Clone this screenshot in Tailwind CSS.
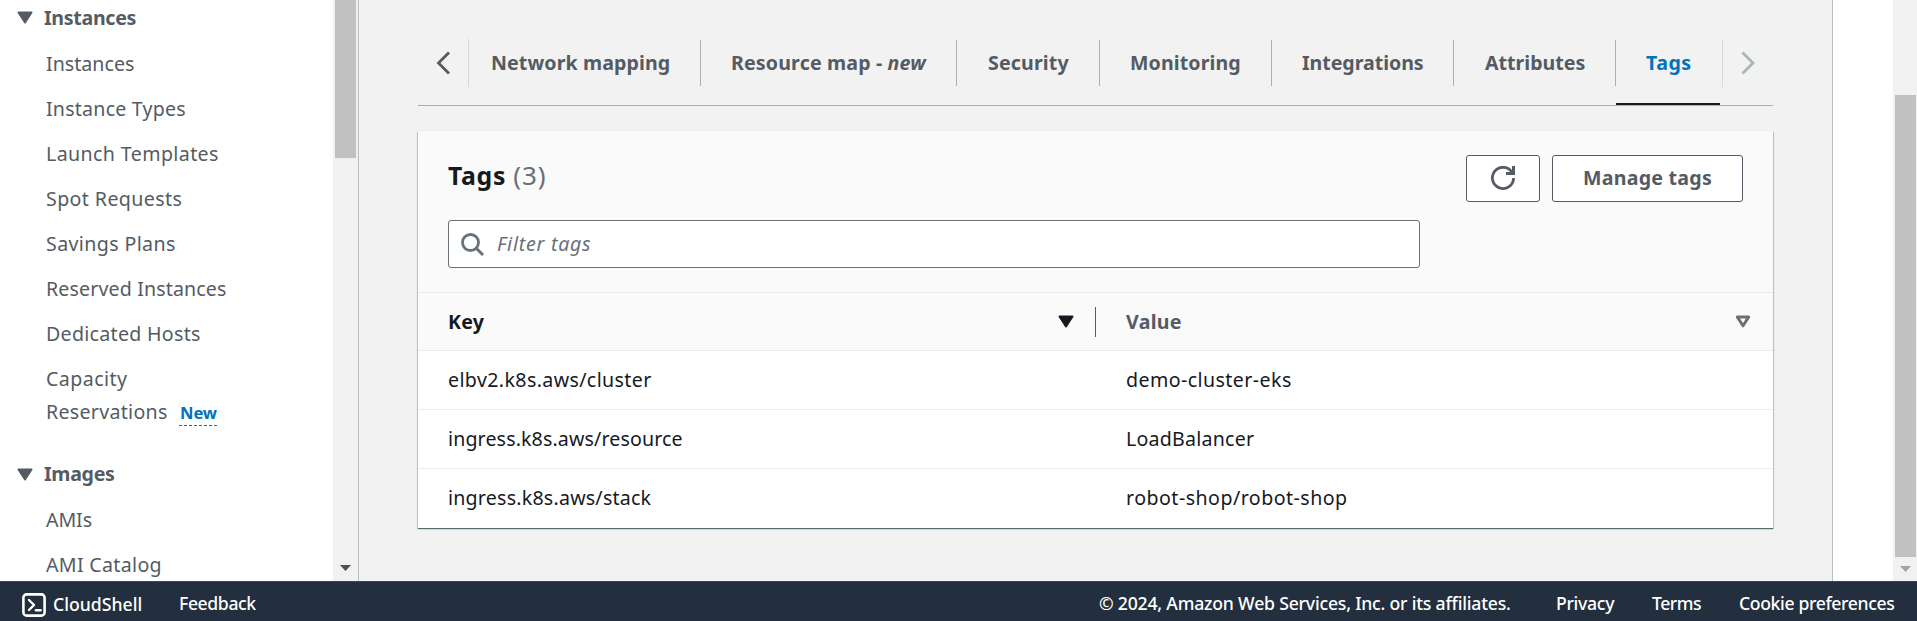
<!DOCTYPE html>
<html lang="en">
<head>
<meta charset="utf-8">
<title>Tags | EC2</title>
<script src="https://cdn.jsdelivr.net/npm/@tailwindcss/browser@4"></script>
</head>
<body class="flex h-[621px] w-[1917px] flex-col overflow-hidden bg-white font-['Noto_Sans',sans-serif] text-[19.6px] whitespace-nowrap text-[#16191f]">
<div class="flex h-[581px] overflow-hidden">

  <!-- Side navigation -->
  <nav class="w-[333px] shrink-0 pt-px leading-[33px] text-[#545b64]">
    <h2 class="flex items-center pl-[17px] font-bold tracking-[-0.3px]"><svg class="mr-[11px] h-[13px] w-[16px]" viewBox="0 0 16 13"><path d="M1.5 1.5h13L8 11.5z" fill="#545b64" stroke="#545b64" stroke-width="2" stroke-linejoin="round"/></svg>Instances</h2>
    <ul class="mt-[13px] flex flex-col gap-[12px] pl-[46px]">
      <li class="tracking-[0.03px]">Instances</li>
      <li class="tracking-[0.22px]">Instance Types</li>
      <li class="tracking-[0.39px]">Launch Templates</li>
      <li class="tracking-[0.4px]">Spot Requests</li>
      <li class="tracking-[0.38px]">Savings Plans</li>
      <li class="tracking-[0.14px]">Reserved Instances</li>
      <li class="tracking-[0.29px]">Dedicated Hosts</li>
      <li><span class="tracking-[0.44px]">Capacity</span><br>
        <span class="flex h-[33px] items-start"><span class="w-[133px] tracking-[0.29px]">Reservations</span><span class="mt-[4px] h-[27px] w-[38px] border-b border-dashed border-[#0073bb] pl-px text-[16.6px] leading-[27px] font-bold tracking-[-0.1px] text-[#0073bb]">New</span></span></li>
    </ul>
    <h2 class="mt-[29px] flex items-center pl-[17px] font-bold tracking-[-0.3px]"><svg class="mt-px mr-[11px] h-[13px] w-[16px]" viewBox="0 0 16 13"><path d="M1.5 1.5h13L8 11.5z" fill="#545b64" stroke="#545b64" stroke-width="2" stroke-linejoin="round"/></svg>Images</h2>
    <ul class="mt-[13px] flex flex-col gap-[12px] pl-[46px]">
      <li class="tracking-[-0.1px]">AMIs</li>
      <li class="tracking-[0.32px]">AMI Catalog</li>
    </ul>
  </nav>
  <div class="flex w-[25px] shrink-0 flex-col items-center justify-between bg-[#f1f1f1] pb-[10px]">
    <div class="h-[158px] w-[21px] bg-[#c1c1c1]"></div>
    <svg class="h-[6px] w-[11px]" viewBox="0 0 11 6"><path d="M0 0h11L5.5 6z" fill="#505050"/></svg>
  </div>

  <!-- Main panel -->
  <main class="w-[1475px] shrink-0 border-x border-[#b7bdc2] bg-[#f2f2f2] pl-[59px]">
    <div class="flex h-[106px] w-[1355px] border-b border-[#aab0b2] pt-[39px] leading-[48px] font-bold text-[#545b64]">
      <div class="h-[48px] w-[51px] border-r border-[#d5dbdb] pt-[12px] pl-[18px]"><svg class="h-[24px] w-[16px]" viewBox="0 0 16 24" fill="none"><path d="M13 1.5 2.5 12 13 22.5" stroke="#545b64" stroke-width="2.8"/></svg></div>
      <div class="mt-px h-[46px] w-[232px] border-r border-[#aab0b2] pl-[22px] leading-[46px] tracking-[0.1px]">Network mapping</div>
      <div class="mt-px h-[46px] w-[256px] border-r border-[#aab0b2] pl-[30px] leading-[46px] tracking-[0.15px]">Resource map - <em class="tracking-[0.1px]">new</em></div>
      <div class="mt-px h-[46px] w-[143px] border-r border-[#aab0b2] pl-[31px] leading-[46px] tracking-[0.15px]">Security</div>
      <div class="mt-px h-[46px] w-[172px] border-r border-[#aab0b2] pl-[30px] leading-[46px] tracking-[0.1px]">Monitoring</div>
      <div class="mt-px h-[46px] w-[182px] border-r border-[#aab0b2] pl-[30px] leading-[46px] tracking-[-0.05px]">Integrations</div>
      <div class="mt-px h-[46px] w-[162px] border-r border-[#aab0b2] pl-[31px] leading-[46px]">Attributes</div>
      <div class="mt-px h-[65px] w-[104px] border-b-2 border-[#16191f] pl-[30px] leading-[46px] tracking-[0.5px] text-[#0073bb]">Tags</div>
      <div class="ml-[2px] h-[48px] w-[50px] border-l border-[#d5dbdb] pt-[12px] pl-[17px]"><svg class="h-[24px] w-[16px]" viewBox="0 0 16 24" fill="none"><path d="M2.5 1.5 13 12 2.5 22.5" stroke="#aab7b8" stroke-width="2.8"/></svg></div>
    </div>

    <section class="mt-[25px] h-[397px] w-[1355px] bg-white shadow-[0_1px_1px_0_rgba(0,28,36,0.5),1px_1px_1px_0_rgba(0,28,36,0.15),-1px_1px_1px_0_rgba(0,28,36,0.15),0_-1px_0_0_#eaeded]">
      <div class="h-[161px] bg-[#fafafa] px-[30px] pt-[24px]">
        <div class="flex h-[47px] justify-between">
          <h1 class="text-[24.8px] leading-[40px] font-bold tracking-[0.7px]">Tags <span class="text-[26px] font-normal tracking-[0.9px] text-[#687078]">(3)</span></h1>
          <div class="flex gap-[12px]">
            <button class="flex h-[47px] w-[74px] items-center justify-center rounded-[3px] border border-[#545b64] bg-white"><svg class="-mt-px h-[24px] w-[24px]" viewBox="0 0 24 24" fill="none" stroke="#545b64"><path d="M22.6 12A10.6 10.6 0 1 1 20.8 6" stroke-width="2.8"/><path d="M22.5 0v7.4H15" stroke-width="3"/><path d="M17 9h7V1z" fill="#545b64" stroke="none"/></svg></button>
            <button class="h-[47px] w-[191px] rounded-[3px] border border-[#545b64] bg-white pb-[2px] pl-[30px] text-left leading-[43px] font-bold tracking-[0.25px] text-[#545b64]">Manage tags</button>
          </div>
        </div>
        <div class="mt-[18px] flex h-[48px] w-[972px] items-center rounded-[3px] border border-[#687078] bg-white pl-[12px]">
          <svg class="h-[23px] w-[24px]" viewBox="0 0 24 23" fill="none" stroke="#687078"><circle cx="9.5" cy="9.5" r="8" stroke-width="2.8"/><path d="m15 15 7 7" stroke-width="3"/></svg>
          <span class="ml-[12px] leading-[46px] tracking-[0.75px] text-[#687078] italic">Filter tags</span>
        </div>
      </div>
      <div class="flex h-[59px] items-center border-y border-[#eaeded] bg-[#fafafa] pr-[22px] pl-[30px] font-bold">
        <div class="flex h-[30px] w-[648px] items-center border-r border-[#545b64] pr-[21px]"><span class="flex-1 leading-[30px] tracking-[0.2px]">Key</span><svg class="h-[13px] w-[16px]" viewBox="0 0 16 13"><path d="M1.5 1.5h13L8 11.5z" fill="#16191f" stroke="#16191f" stroke-width="2" stroke-linejoin="round"/></svg></div>
        <div class="flex flex-1 items-center pl-[30px] text-[#545b64]"><span class="flex-1 leading-[30px] tracking-[0.3px]">Value</span><svg class="h-[13px] w-[16px]" viewBox="0 0 16 13" fill="none"><path d="M2.3 2h11.4L8 10.8z" stroke="#687078" stroke-width="3" stroke-linejoin="round"/></svg></div>
      </div>
      <div class="flex h-[59px] border-b border-[#eaeded] pl-[30px] leading-[58px]"><div class="w-[678px] tracking-[0.38px]">elbv2.k8s.aws/cluster</div><div class="tracking-[0.42px]">demo-cluster-eks</div></div>
      <div class="flex h-[59px] border-b border-[#eaeded] pl-[30px] leading-[58px]"><div class="w-[678px] tracking-[0.13px]">ingress.k8s.aws/resource</div><div class="tracking-[0.23px]">LoadBalancer</div></div>
      <div class="flex h-[59px] pl-[30px] leading-[58px]"><div class="w-[678px] tracking-[0.22px]">ingress.k8s.aws/stack</div><div class="tracking-[0.47px]">robot-shop/robot-shop</div></div>
    </section>
  </main>

  <!-- Page scrollbar -->
  <div class="ml-auto flex w-[24px] shrink-0 flex-col items-end bg-[#f1f1f1] pt-[95px] pr-px">
    <div class="h-[462px] w-[21px] bg-[#c1c1c1]"></div>
    <svg class="mt-[9px] mr-[5px] h-[6px] w-[11px]" viewBox="0 0 11 6"><path d="M0 0h11L5.5 6z" fill="#a3a3a3"/></svg>
  </div>
</div>

<!-- Console footer -->
<footer class="flex h-[40px] bg-[#232f3e] pl-[22px] text-[17.64px] leading-[44px] font-medium text-white shadow-[inset_0_1px_0_#3b4654]">
  <svg class="mt-[12px] h-[24px] w-[24px]" viewBox="0 0 24 24" fill="none" stroke="#fff" stroke-linecap="round" stroke-linejoin="round"><rect x="1.4" y="1.4" width="21.2" height="21.2" rx="3.2" stroke-width="2.6"/><path d="m7 7 5 5-5 5" stroke-width="2.4"/><path d="M14 17.3h4.5" stroke-width="2.6"/></svg>
  <span class="ml-[7px] w-[126px] leading-[46px] tracking-[0.02px]">CloudShell</span>
  <span class="tracking-[-0.4px]">Feedback</span>
  <span class="ml-auto w-[457px] tracking-[-0.2px]">© 2024, Amazon Web Services, Inc. or its affiliates.</span>
  <span class="w-[96px] tracking-[-0.3px]">Privacy</span>
  <span class="w-[87px] tracking-[-0.5px]">Terms</span>
  <span class="w-[178px] tracking-[-0.38px]">Cookie preferences</span>
</footer>
</body>
</html>
